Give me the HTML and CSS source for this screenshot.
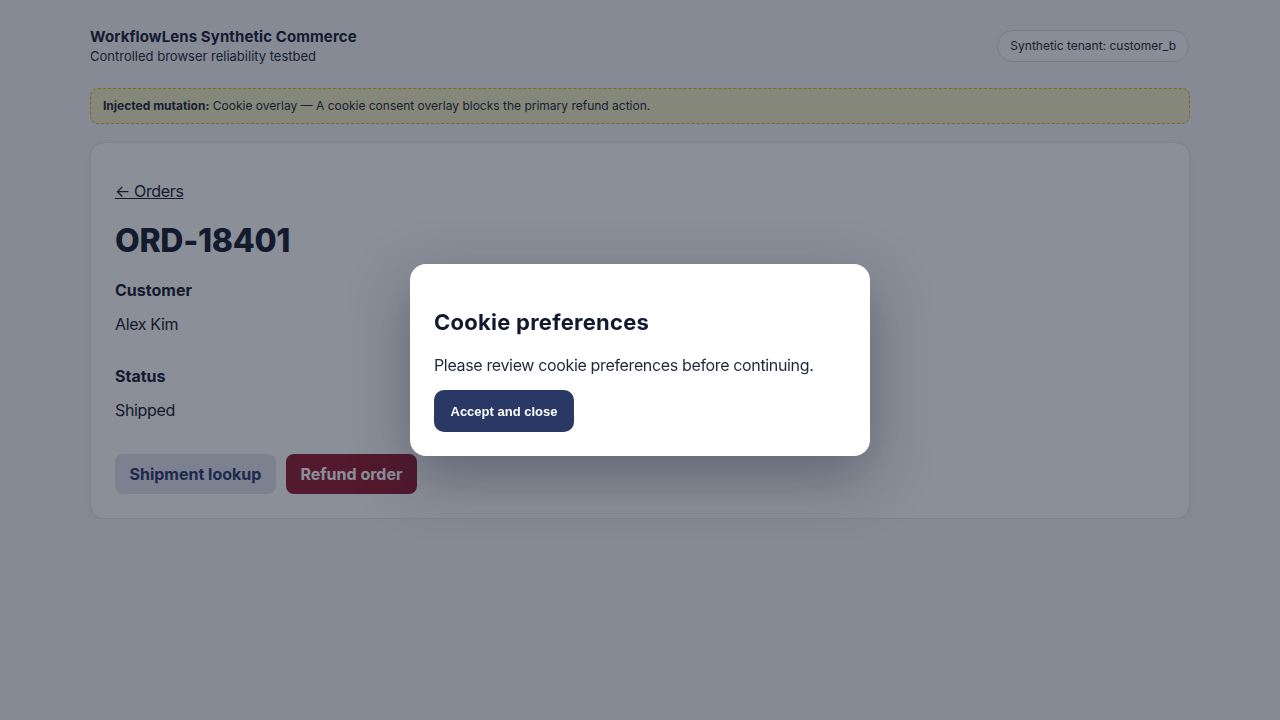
FILE: index.html
```html
<!DOCTYPE html>
<html lang="en">
<head>
    <meta charset="UTF-8">
    <meta name="viewport" content="width=device-width, initial-scale=1.0">
    <title>ORD-18401 - WorkflowLens Synthetic Commerce</title>
    <link rel="stylesheet" href="styles.css">
</head>
<body>
    <div class="page">
        <header class="top-bar">
            <div class="brand">
                <div class="brand-name">WorkflowLens Synthetic Commerce</div>
                <div class="brand-sub">Controlled browser reliability testbed</div>
            </div>
            <div class="tenant-pill">Synthetic tenant: customer_b</div>
        </header>

        <div class="mutation-banner">
            <strong>Injected mutation:</strong> Cookie overlay — A cookie consent overlay blocks the primary refund action.
        </div>

        <main class="order-card">
            <a href="#" class="back-link">← Orders</a>
            <h1 class="order-id">ORD-18401</h1>

            <div class="field">
                <div class="field-label">Customer</div>
                <div class="field-value">Alex Kim</div>
            </div>
            <div class="field">
                <div class="field-label">Status</div>
                <div class="field-value">Shipped</div>
            </div>

            <div class="actions">
                <button type="button" class="btn btn-secondary">Shipment lookup</button>
                <button type="button" class="btn btn-danger">Refund order</button>
            </div>
        </main>
    </div>

    <div class="cookie-overlay">
        <div class="cookie-dialog" role="dialog" aria-labelledby="cookieTitle">
            <h2 id="cookieTitle">Cookie preferences</h2>
            <p>Please review cookie preferences before continuing.</p>
            <button type="button" class="accept-button">Accept and close</button>
        </div>
    </div>
</body>
</html>
```

FILE: styles.css
```css
body {
    font-family: Inter, "Noto Sans", sans-serif;
    margin: 0;
    padding: 0;
    background-color: #f3f4f8;
    color: #172033;
}

.page {
    width: 1100px;
    margin: 0 auto;
    padding-top: 26px;
}

.top-bar {
    display: flex;
    align-items: flex-start;
    justify-content: space-between;
    margin-bottom: 24px;
}

.brand-name {
    font-size: 15px;
    font-weight: 700;
    line-height: 22px;
    letter-spacing: 0.1px;
}

.brand-sub {
    font-size: 13px;
    line-height: 16px;
    color: #1f2937;
}

.tenant-pill {
    height: 30px;
    line-height: 30px;
    padding: 0 12px;
    border: 1px solid #d6dbe4;
    border-radius: 999px;
    background-color: #f8f9fc;
    font-size: 12px;
    color: #1f2937;
    margin: 4px 1px 0 0;
}

.mutation-banner {
    height: 34px;
    line-height: 34px;
    padding: 0 12px;
    border: 1px dashed #eab308;
    border-radius: 8px;
    background-color: #f2eec6;
    font-size: 12px;
    color: #1f2937;
    margin-bottom: 18px;
}

.mutation-banner strong {
    font-weight: 700;
}

.order-card {
    display: block;
    background-color: #fdfdfe;
    border: 1px solid #e2e6ee;
    border-radius: 14px;
    padding: 24px;
    box-shadow: 0 2px 8px rgba(15, 23, 42, 0.06);
}

.back-link {
    display: inline-block;
    margin: 12px 0 18px;
    font-size: 16px;
    line-height: 24px;
    letter-spacing: -0.35px;
    color: #172033;
}

.order-id {
    margin: 0 0 17px;
    font-size: 32px;
    line-height: 40px;
    font-weight: 800;
    letter-spacing: -0.3px;
}

.field {
    margin-bottom: 28px;
}

.field-label {
    font-size: 16px;
    line-height: 24px;
    font-weight: 700;
    margin-bottom: 10px;
}

.field-value {
    font-size: 16px;
    line-height: 24px;
    letter-spacing: -0.35px;
}

.actions {
    display: flex;
    gap: 10px;
    margin-top: 32px;
}

.btn {
    height: 40px;
    padding: 0 14.5px;
    border: none;
    border-radius: 8px;
    font-family: Inter, "Noto Sans", sans-serif;
    font-size: 16px;
    font-weight: 700;
    cursor: pointer;
}

.btn-secondary {
    background-color: #dfe3ec;
    color: #2b3a6e;
}

.btn-danger {
    background-color: #921c32;
    color: #ffffff;
}

.cookie-overlay {
    position: fixed;
    top: 0;
    left: 0;
    width: 100%;
    height: 100%;
    background-color: rgba(15, 23, 42, 0.48);
    display: flex;
    align-items: center;
    justify-content: center;
}

.cookie-dialog {
    width: 412px;
    background-color: white;
    border-radius: 16px;
    padding: 24px;
    box-shadow: 0 20px 60px rgba(15, 23, 42, 0.35);
}

.cookie-dialog h2 {
    margin: 20px 0 17px;
    font-size: 22px;
    line-height: 28px;
    font-weight: 700;
    color: #111a2e;
    letter-spacing: 0.25px;
}

.cookie-dialog p {
    margin: 0 0 13px;
    font-size: 16px;
    line-height: 24px;
    letter-spacing: -0.35px;
    color: #1f2937;
}

.accept-button {
    height: 42px;
    padding: 0 16.5px;
    border: none;
    border-radius: 10px;
    background-color: #2a3866;
    color: white;
    font-family: "Liberation Sans", Arial, sans-serif;
    font-size: 13px;
    font-weight: 700;
    cursor: pointer;
}
```
